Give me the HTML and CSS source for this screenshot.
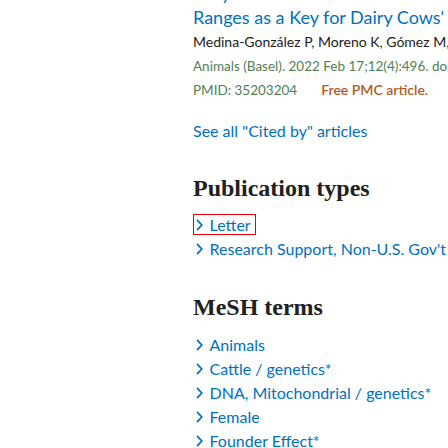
FILE: index.html
```html
<!DOCTYPE html>
<html>
<head>
<meta charset="utf-8">
<link rel="stylesheet" href="styles.css">
</head>
<body>
<main class="page">
  <section class="cited">
    <a class="title" href="#"><span class="line">Why Mitochondrial DNA Matters in Altitudinal</span><span class="line">Ranges as a Key for Dairy Cows' Adaptation to Tropical Conditions</span></a>
    <div class="authors">Medina-González P, Moreno K, Gómez M, Acosta C, Vásquez S.</div>
    <div class="citation">Animals (Basel). 2022 Feb 17;12(4):496. doi: 10.3390/ani12040496.</div>
    <div class="ids"><span class="pmid">PMID: 35203204</span><span class="free">Free PMC article.</span></div>
    <a class="see-all" href="#">See all "Cited by" articles</a>
  </section>

  <section class="block pubtypes">
    <h2 class="heading">Publication types</h2>
    <ul class="terms">
      <li><a class="term focused" href="#"><svg class="chev" viewBox="0 0 7 12" width="7" height="12"><path d="M1 0.8 L5.8 6 L1 11.2" fill="none" stroke="#0071bc" stroke-width="1.7"/></svg><span>Letter</span></a></li>
      <li><a class="term" href="#"><svg class="chev" viewBox="0 0 7 12" width="7" height="12"><path d="M1 0.8 L5.8 6 L1 11.2" fill="none" stroke="#0071bc" stroke-width="1.7"/></svg><span>Research Support, Non-U.S. Gov't</span></a></li>
    </ul>
  </section>

  <section class="block mesh">
    <h2 class="heading">MeSH terms</h2>
    <ul class="terms">
      <li><a class="term" href="#"><svg class="chev" viewBox="0 0 7 12" width="7" height="12"><path d="M1 0.8 L5.8 6 L1 11.2" fill="none" stroke="#0071bc" stroke-width="1.7"/></svg><span>Animals</span></a></li>
      <li><a class="term" href="#"><svg class="chev" viewBox="0 0 7 12" width="7" height="12"><path d="M1 0.8 L5.8 6 L1 11.2" fill="none" stroke="#0071bc" stroke-width="1.7"/></svg><span>Cattle / genetics*</span></a></li>
      <li><a class="term" href="#"><svg class="chev" viewBox="0 0 7 12" width="7" height="12"><path d="M1 0.8 L5.8 6 L1 11.2" fill="none" stroke="#0071bc" stroke-width="1.7"/></svg><span>DNA, Mitochondrial / genetics*</span></a></li>
      <li><a class="term" href="#"><svg class="chev" viewBox="0 0 7 12" width="7" height="12"><path d="M1 0.8 L5.8 6 L1 11.2" fill="none" stroke="#0071bc" stroke-width="1.7"/></svg><span>Female</span></a></li>
      <li><a class="term" href="#"><svg class="chev" viewBox="0 0 7 12" width="7" height="12"><path d="M1 0.8 L5.8 6 L1 11.2" fill="none" stroke="#0071bc" stroke-width="1.7"/></svg><span>Founder Effect*</span></a></li>
    </ul>
  </section>
</main>
</body>
</html>
```

FILE: styles.css
```css
html, body {
  margin: 0;
  padding: 0;
  background: #ffffff;
  overflow: hidden;
  width: 448px;
  height: 448px;
}

.page {
  padding-left: 193px;
  margin-top: -19px;
  font-family: Lato, "Open Sans", sans-serif;
  color: #212121;
  white-space: nowrap;
}

a {
  text-decoration: none;
  color: #0071bc;
}

.cited {
  display: flex;
  flex-direction: column;
  align-items: flex-start;
}

.title {
  display: flex;
  flex-direction: column;
  font-size: 18px;
  line-height: 24px;
}

.authors {
  margin-top: 1px;
  font-size: 14px;
  line-height: 24px;
  color: #212121;
}

.citation {
  font-size: 13.5px;
  line-height: 24px;
  color: #4f7f57;
}

.ids {
  display: flex;
  align-items: baseline;
  gap: 24px;
  line-height: 24px;
}

.pmid {
  font-size: 13.5px;
  color: #4f7f57;
}

.free {
  font-size: 14px;
  font-weight: 600;
  color: #b35a1a;
}

.see-all {
  margin-top: 17px;
  font-size: 16px;
  line-height: 24px;
}

.pubtypes {
  margin-top: 29.5px;
}

.mesh {
  margin-top: 30.5px;
}

.heading {
  margin: 0 0 11px;
  font-family: "Liberation Serif", serif;
  font-weight: 700;
  font-size: 24px;
  line-height: 30px;
  color: #212121;
}

.terms {
  list-style: none;
  margin: 0;
  padding: 0;
}

.terms li {
  display: flex;
  align-items: flex-start;
  height: 24px;
  font-size: 16px;
}

.term {
  display: flex;
  align-items: center;
  gap: 7px;
  line-height: 18px;
  padding: 1.5px 4px 0 1.5px;
  border: 1px solid transparent;
}

.term.focused {
  border-color: #e8000b;
}

.chev {
  flex: none;
}
```
